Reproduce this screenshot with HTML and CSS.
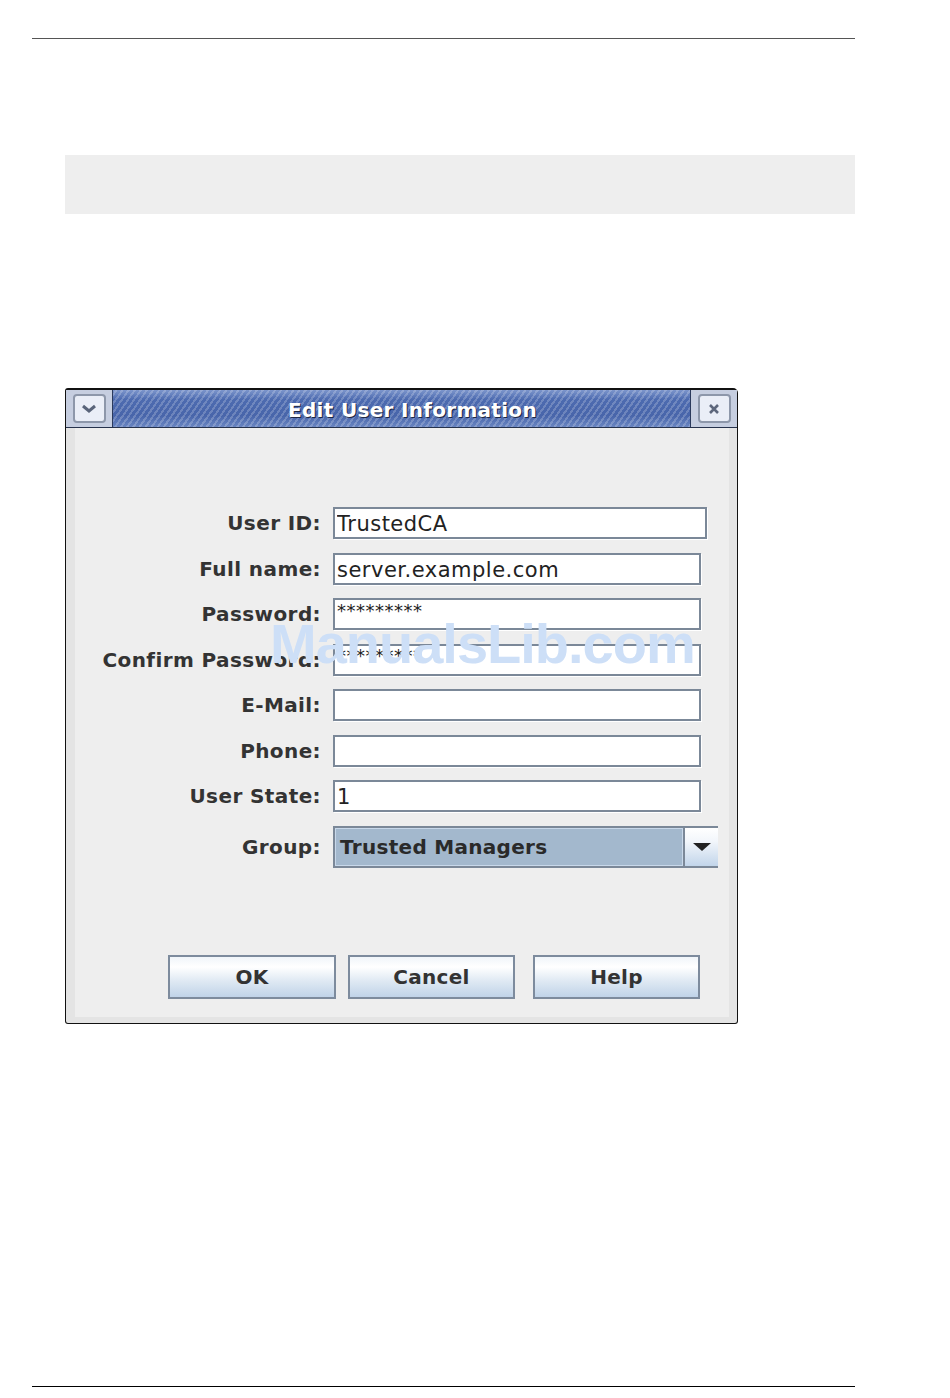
FILE: index.html
```html
<!DOCTYPE html>
<html lang="en">

<head>
    <meta charset="UTF-8">
    <meta name="viewport" content="width=device-width, initial-scale=1.0">
    <title>Edit User Information</title>
    <link rel="stylesheet" href="styles.css">
</head>

<body>
    <div class="page">
        <div class="rule rule-top"></div>

        <div class="note-box"></div>

        <div class="dialog">
            <div class="titlebar">
                <div class="tb-area">
                    <span class="tb-btn">
                        <svg width="18" height="12" viewBox="0 0 18 12">
                            <path d="M3 3 L9 8 L15 3" fill="none" stroke="#59647a" stroke-width="3" />
                        </svg>
                    </span>
                </div>
                <div class="tb-title">Edit User Information</div>
                <div class="tb-area">
                    <span class="tb-btn">
                        <svg width="12" height="12" viewBox="0 0 12 12">
                            <path d="M2 2 L10 10 M10 2 L2 10" fill="none" stroke="#5d677c" stroke-width="2.6" />
                        </svg>
                    </span>
                </div>
            </div>

            <div class="frame">
                <div class="body">
                    <div class="form">
                        <label class="lbl">User ID:</label>
                        <input class="field field-wide" type="text" value="TrustedCA" readonly>

                        <label class="lbl">Full name:</label>
                        <input class="field" type="text" value="server.example.com" readonly>

                        <label class="lbl">Password:</label>
                        <input class="field field-secret" type="text" value="*********" readonly>

                        <label class="lbl">Confirm Password:</label>
                        <input class="field field-secret" type="text" value="*********" readonly>

                        <label class="lbl">E-Mail:</label>
                        <input class="field" type="text" value="" readonly>

                        <label class="lbl">Phone:</label>
                        <input class="field" type="text" value="" readonly>

                        <label class="lbl">User State:</label>
                        <input class="field" type="text" value="1" readonly>

                        <label class="lbl">Group:</label>
                        <div class="combo">
                            <div class="combo-value">Trusted Managers</div>
                            <div class="combo-arrow"><span class="triangle"></span></div>
                        </div>
                    </div>

                    <div class="buttons">
                        <button class="btn btn-ok">OK</button>
                        <button class="btn btn-cancel">Cancel</button>
                        <button class="btn btn-help">Help</button>
                    </div>
                </div>
            </div>

            <div class="watermark">ManualsLib.com</div>
        </div>

        <div class="rule rule-bottom"></div>
    </div>
</body>

</html>
```

FILE: styles.css
```css
body {
    margin: 0;
    background: #fff;
    font-family: "DejaVu Sans", "Liberation Sans", sans-serif;
}

.page {
    padding: 38px 0 12px 32px;
}

.rule {
    width: 823px;
    height: 1px;
}

.rule-top {
    background-color: #555;
}

.rule-bottom {
    background-color: #000;
    margin-top: 362px;
}

.note-box {
    margin: 116px 0 0 33px;
    width: 790px;
    height: 59px;
    background-color: #eeeeee;
}

/* dialog window */

.dialog {
    position: relative;
    margin: 174px 0 0 33px;
    width: 671px;
    border: 1px solid #111;
    border-top-width: 2px;
    border-radius: 3px 5px 3px 3px;
    background-color: #e4e4e4;
}

.titlebar {
    display: flex;
    height: 37px;
    border-bottom: 1px solid #26324c;
}

.tb-area {
    width: 46px;
    display: flex;
    align-items: center;
    justify-content: center;
    background-color: #c6cee0;
}

.tb-btn {
    width: 29px;
    height: 25px;
    display: flex;
    align-items: center;
    justify-content: center;
    border: 2px solid #8d97aa;
    border-radius: 4px;
    background-color: #eaeef7;
}

.tb-title {
    flex: 1;
    display: flex;
    align-items: center;
    justify-content: center;
    padding: 3px 0 0 22px;
    border-left: 1px solid #2b3a5c;
    border-right: 1px solid #2b3a5c;
    color: #fff;
    font-weight: bold;
    font-size: 20px;
    letter-spacing: 0.3px;
    text-shadow: 1px 1px 0 #1d2744;
    background:
        repeating-linear-gradient(-55deg, rgba(255, 255, 255, 0.2) 0 2px, transparent 2px 5px),
        linear-gradient(#7d96cc, #4d6bb0 25%, #4865aa 70%, #6a86c2);
}

.frame {
    padding: 0 8px 6px 9px;
}

.body {
    background-color: #eeeeee;
    padding: 79px 0 18px 0;
}

/* form */

.form {
    display: grid;
    grid-template-columns: 246px auto;
    column-gap: 12px;
    row-gap: 13.5px;
    align-items: center;
}

.lbl {
    justify-self: end;
    color: #333;
    font-weight: bold;
    font-size: 20px;
    letter-spacing: 0.4px;
    white-space: nowrap;
}

.field {
    width: 368px;
    height: 32px;
    box-sizing: border-box;
    margin: 0;
    padding: 2px 2px 0 2px;
    border: 2px solid #7b8898;
    box-shadow: 1px 1px 0 #fff;
    background-color: #fff;
    color: #222;
    font-family: "DejaVu Sans", sans-serif;
    font-size: 21px;
    letter-spacing: 0.5px;
    outline: none;
}

.field-wide {
    width: 374px;
}

.field-secret {
    padding: 0 2px 8px 2px;
    font-size: 18px;
    letter-spacing: 0.5px;
}

.combo {
    display: flex;
    width: 385px;
    height: 42px;
    box-sizing: border-box;
    border: 2px solid #7b8898;
    border-right: none;
}

.combo-value {
    flex: 1;
    display: flex;
    align-items: center;
    padding-left: 4px;
    border: 1px solid #c8d8ea;
    background-color: #a3b8cd;
    color: #2a2a2a;
    font-weight: bold;
    font-size: 20px;
    letter-spacing: 0.3px;
}

.combo-arrow {
    width: 33px;
    display: flex;
    align-items: center;
    justify-content: center;
    border-left: 2px solid #7b8898;
    background: linear-gradient(#ffffff, #f2f6fb 35%, #c2d5ea);
}

.triangle {
    width: 0;
    height: 0;
    border-left: 9px solid transparent;
    border-right: 9px solid transparent;
    border-top: 8px solid #222;
}

/* buttons */

.buttons {
    display: flex;
    gap: 12px;
    margin-top: 87px;
    padding-left: 93px;
}

.btn {
    height: 44px;
    width: 168px;
    border: 2px solid #7d8b9d;
    background: linear-gradient(#f0f5fa, #ffffff 25%, #dfe9f3 60%, #c0d3e8);
    color: #333;
    font-family: "DejaVu Sans", sans-serif;
    font-weight: bold;
    font-size: 20px;
    letter-spacing: 0.3px;
    cursor: pointer;
}

.btn-cancel,
.btn-help {
    width: 167px;
}

.btn-help {
    margin-left: 6px;
}

.watermark {
    position: absolute;
    left: 204px;
    top: 226px;
    line-height: 56px;
    color: #cddff7;
    font-family: "Liberation Sans", Arial, sans-serif;
    font-weight: bold;
    font-size: 56px;
    letter-spacing: -1px;
    pointer-events: none;
}
```
